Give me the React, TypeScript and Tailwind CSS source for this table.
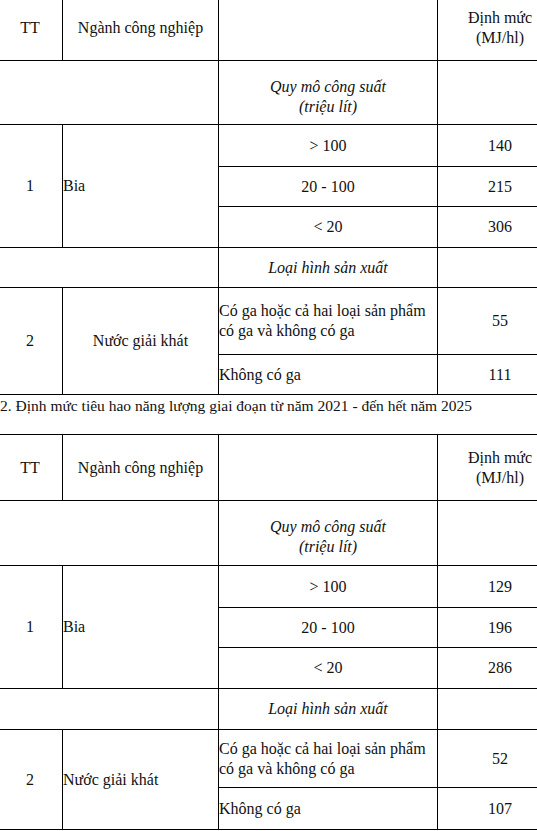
type Tier = { range: string; value: string };

interface TableData {
  rows: number[]; // row heights, px
  tiers: Tier[];
  drinks: { carbonated: string; still: string };
  drinkLeft: boolean;
}

const cell = 'border border-black p-0 align-middle';

function NormTable({ rows, tiers, drinks, drinkLeft }: TableData) {
  return (
    <table className="w-[565px] -ml-[3px] table-fixed border-collapse text-[16px] leading-[20px] text-[#111]">
      <colgroup>
        <col className="w-[65px]" />
        <col className="w-[156px]" />
        <col className="w-[219px]" />
        <col className="w-[125px]" />
      </colgroup>
      <tbody>
        <tr style={{ height: rows[0] }}>
          <td className={`${cell} text-center`}>TT</td>
          <td className={`${cell} text-center`}>Ngành công nghiệp</td>
          <td className={cell}></td>
          <td className={`${cell} text-center`}>
            Định mức
            <br />
            (MJ/hl)
          </td>
        </tr>
        <tr style={{ height: rows[1] }}>
          <td className={cell} colSpan={2}></td>
          <td className={`${cell} text-center italic pt-[8px]`}>
            Quy mô công suất
            <br />
            (triệu lít)
          </td>
          <td className={cell}></td>
        </tr>
        {tiers.map((t, i) => (
          <tr key={t.range} style={{ height: rows[2 + i] }}>
            {i === 0 && (
              <>
                <td className={`${cell} text-center`} rowSpan={3}>1</td>
                <td className={`${cell} text-left`} rowSpan={3}>Bia</td>
              </>
            )}
            <td className={`${cell} text-center`}>{t.range}</td>
            <td className={`${cell} text-center`}>{t.value}</td>
          </tr>
        ))}
        <tr style={{ height: rows[5] }}>
          <td className={cell} colSpan={2}></td>
          <td className={`${cell} text-center italic`}>Loại hình sản xuất</td>
          <td className={cell}></td>
        </tr>
        <tr style={{ height: rows[6] }}>
          <td className={`${cell} text-center`} rowSpan={2}>2</td>
          <td className={`${cell} ${drinkLeft ? 'text-left' : 'text-center'}`} rowSpan={2}>
            Nước giải khát
          </td>
          <td className={`${cell} text-left`}>
            Có ga hoặc cả hai loại sản phẩm
            <br />
            có ga và không có ga
          </td>
          <td className={`${cell} text-center`}>{drinks.carbonated}</td>
        </tr>
        <tr style={{ height: rows[7] }}>
          <td className={`${cell} text-left`}>Không có ga</td>
          <td className={`${cell} text-center`}>{drinks.still}</td>
        </tr>
      </tbody>
    </table>
  );
}

export default function App() {
  return (
    <div className="font-['Liberation_Serif',serif] w-[537px] h-[831px] overflow-hidden bg-white">
      <div className="-mt-[6px]">
        <NormTable
          rows={[66, 64, 42, 40, 41, 40, 67, 40]}
          tiers={[
            { range: '> 100', value: '140' },
            { range: '20 - 100', value: '215' },
            { range: '< 20', value: '306' },
          ]}
          drinks={{ carbonated: '55', still: '111' }}
          drinkLeft={false}
        />
      </div>
      <p className="h-[39px] pt-[1px] text-[15.5px] leading-[20px] text-[#111] whitespace-nowrap">
        2. Định mức tiêu hao năng lượng giai đoạn từ năm 2021 - đến hết năm 2025
      </p>
      <NormTable
        rows={[66, 65, 42, 40, 41, 41, 58, 42]}
        tiers={[
          { range: '> 100', value: '129' },
          { range: '20 - 100', value: '196' },
          { range: '< 20', value: '286' },
        ]}
        drinks={{ carbonated: '52', still: '107' }}
        drinkLeft={true}
      />
    </div>
  );
}
